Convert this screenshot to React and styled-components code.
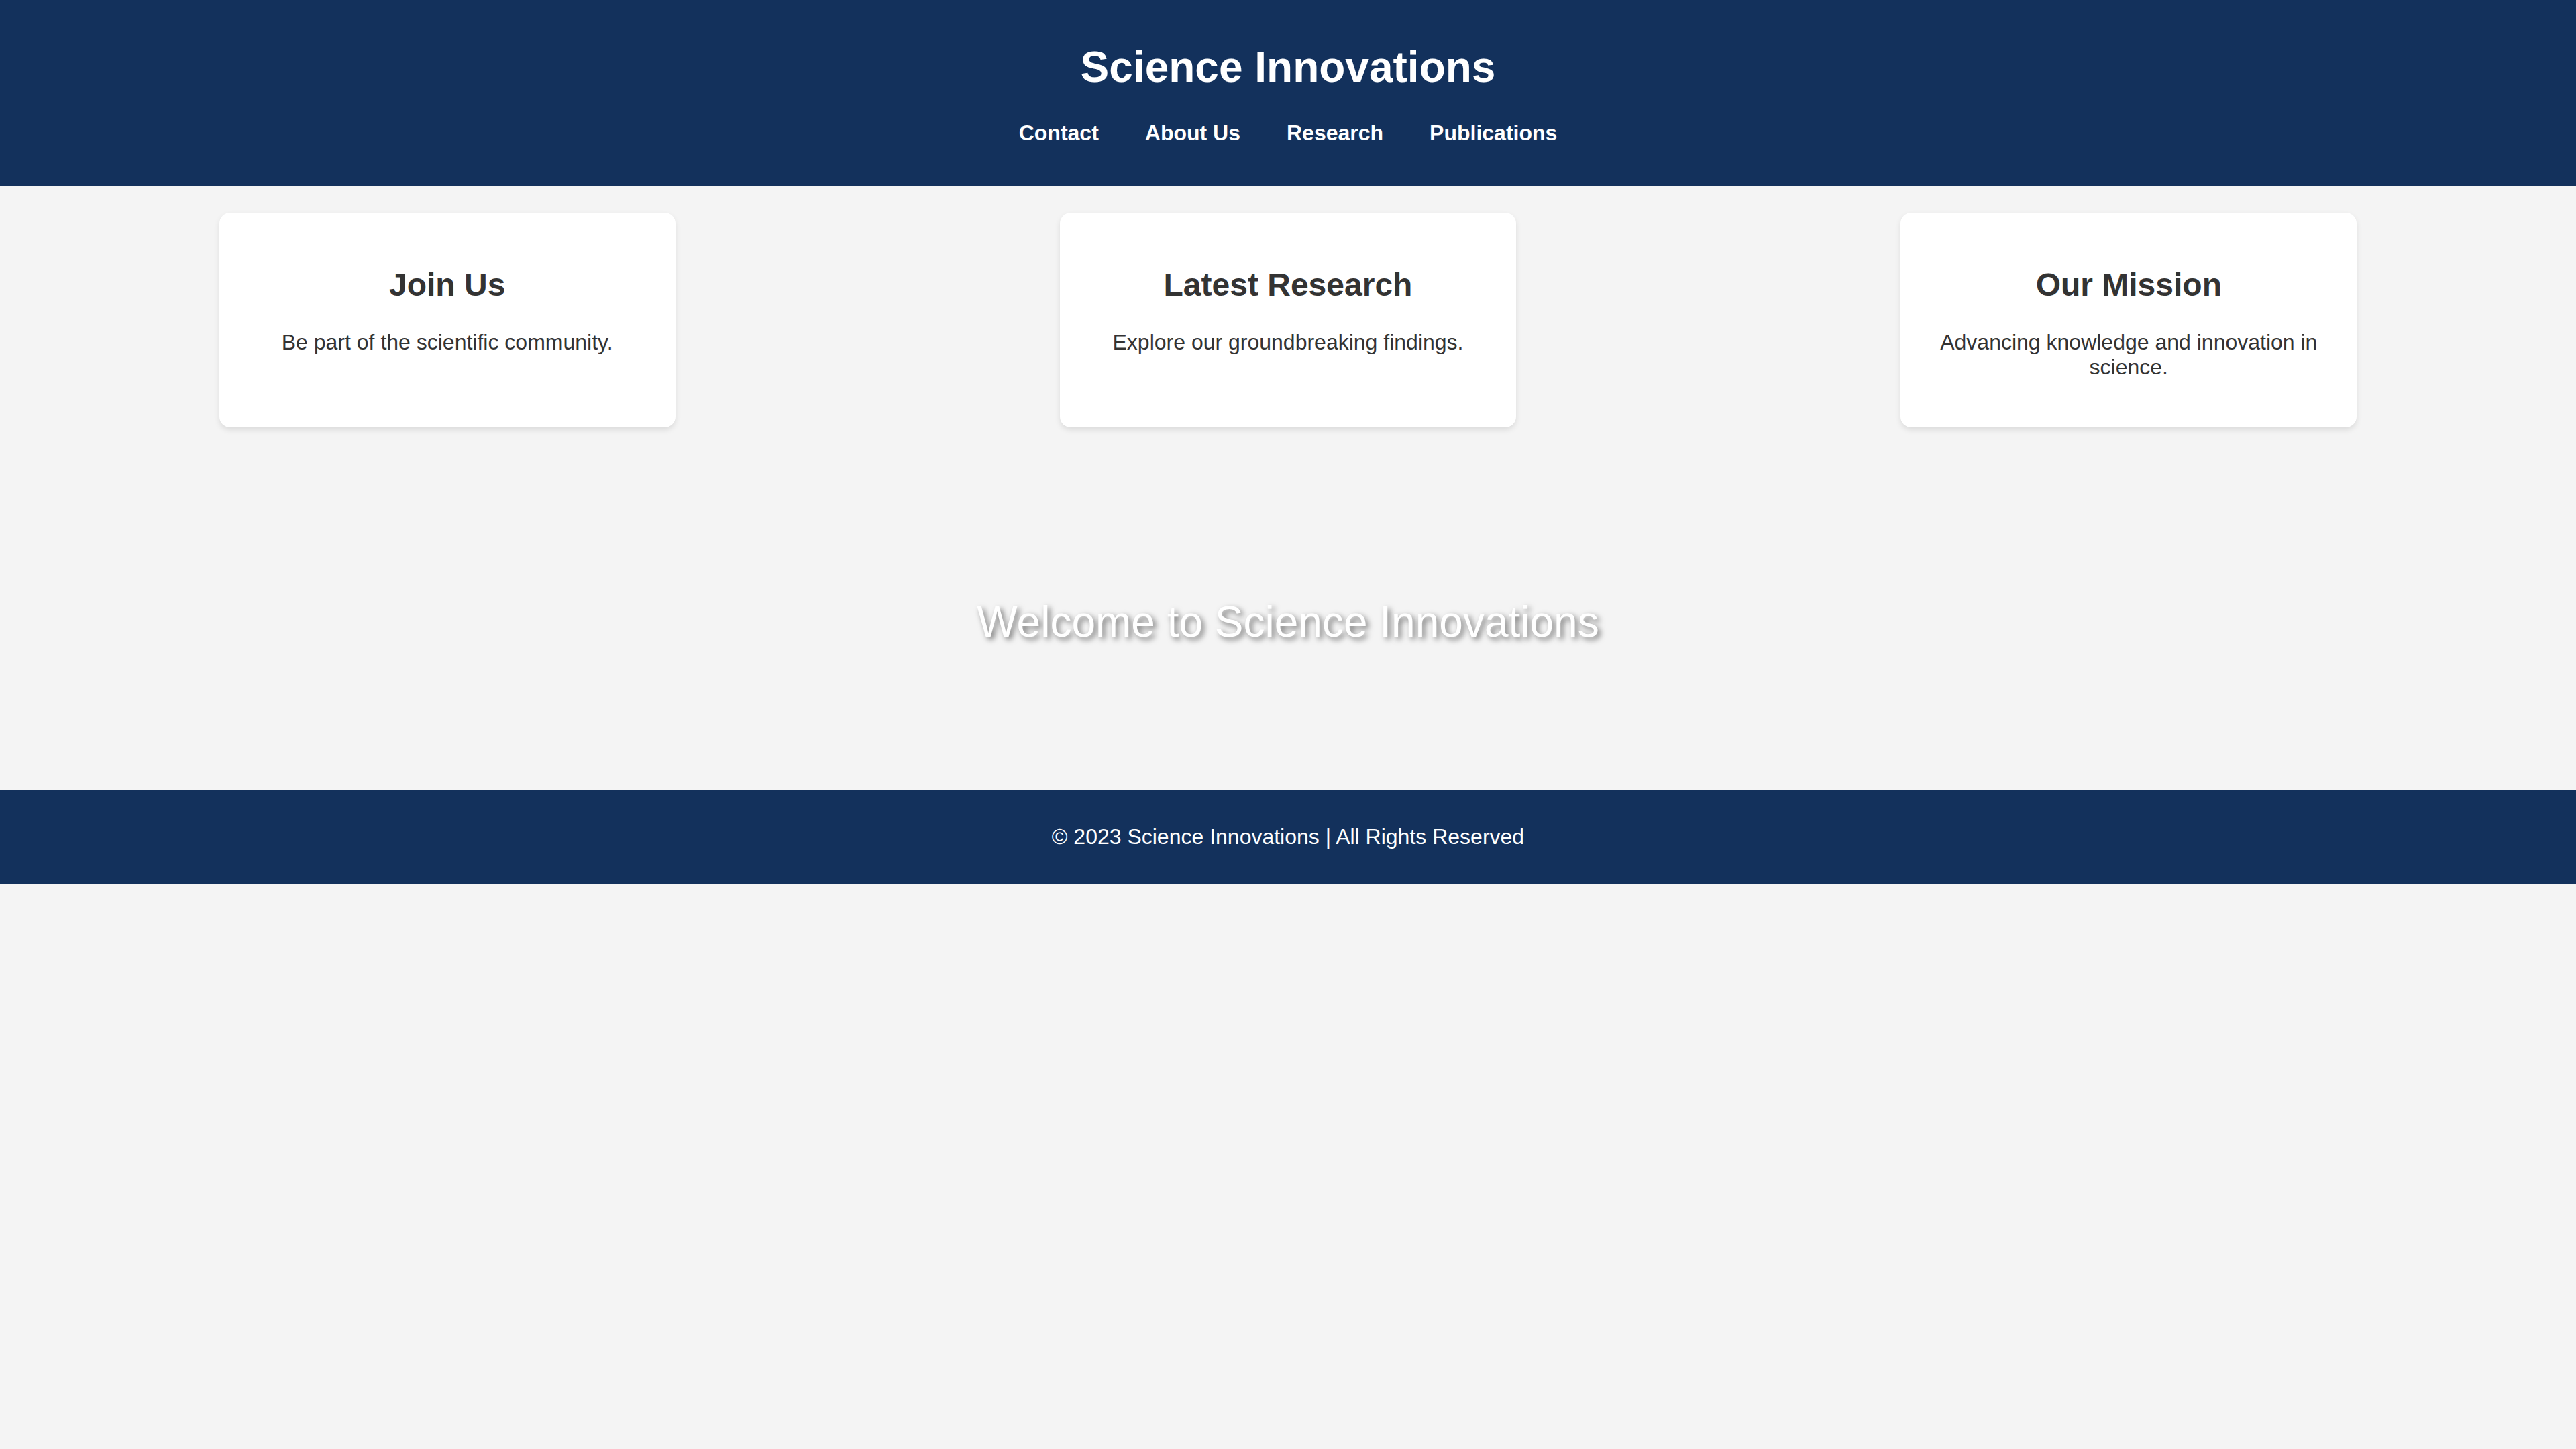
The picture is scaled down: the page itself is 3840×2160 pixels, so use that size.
import styled, { createGlobalStyle } from "styled-components";

const NAV_LINKS = ["Contact", "About Us", "Research", "Publications"];

const CARDS = [
  { title: "Join Us", text: "Be part of the scientific community." },
  { title: "Latest Research", text: "Explore our groundbreaking findings." },
  {
    title: "Our Mission",
    text: "Advancing knowledge and innovation in science.",
  },
];

const GlobalStyle = createGlobalStyle`
  html, body {
    margin: 0;
    padding: 0;
    background-color: #f4f4f4;
    color: #333;
    font-family: "Liberation Sans", Arial, sans-serif;
  }
`;

const Header = styled.header`
  background-color: #13315c;
  color: #fff;
  padding: 20px 0;
  text-align: center;
`;

const Title = styled.h1`
  font-size: 64px;
  font-weight: 700;
  margin: 43px 0;
`;

const NavList = styled.ul`
  list-style: none;
  margin: 0 0 40px;
  padding: 0;
  display: flex;
  justify-content: center;
  gap: 69px;
`;

const NavLink = styled.a`
  color: #fff;
  font-size: 32px;
  font-weight: 700;
  text-decoration: none;
`;

const CardRow = styled.section`
  display: flex;
  justify-content: space-around;
  align-items: stretch;
  padding: 40px;
`;

const Card = styled.div`
  width: 600px;
  margin: 0 40px;
  padding: 40px;
  background-color: #fff;
  border-radius: 16px;
  box-shadow: 0 4px 8px rgba(0, 0, 0, 0.1);
  text-align: center;
`;

const CardTitle = styled.h2`
  font-size: 48px;
  font-weight: 700;
  color: #333;
  margin: 40px 0;
`;

const CardText = styled.p`
  font-size: 32px;
  color: #333;
  margin: 32px 0 31px;
`;

const Hero = styled.section`
  height: 500px;
  display: flex;
  align-items: center;
  justify-content: center;
  color: #fff;
  font-size: 64px;
  text-shadow: 4px 4px 8px rgba(0, 0, 0, 0.55);
`;

const Footer = styled.footer`
  background-color: #13315c;
  color: #fff;
  padding: 20px;
  text-align: center;

  p {
    font-size: 32px;
    margin: 32px 0;
  }
`;

const App = () => {
  return (
    <>
      <GlobalStyle />
      <Header>
        <Title>Science Innovations</Title>
        <nav>
          <NavList>
            {NAV_LINKS.map((link) => (
              <li key={link}>
                <NavLink href="#">{link}</NavLink>
              </li>
            ))}
          </NavList>
        </nav>
      </Header>
      <CardRow>
        {CARDS.map((card) => (
          <Card key={card.title}>
            <CardTitle>{card.title}</CardTitle>
            <CardText>{card.text}</CardText>
          </Card>
        ))}
      </CardRow>
      <Hero>Welcome to Science Innovations</Hero>
      <Footer>
        <p>&copy; 2023 Science Innovations | All Rights Reserved</p>
      </Footer>
    </>
  );
};

export default App;
